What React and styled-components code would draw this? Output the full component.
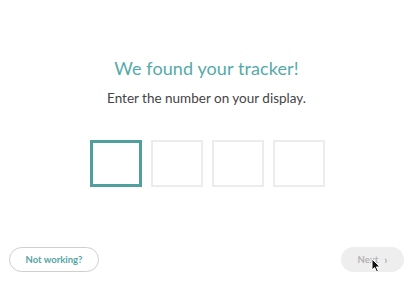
import React, { useState } from "react";
import styled, { createGlobalStyle } from "styled-components";

const GlobalStyle = createGlobalStyle`
  html, body {
    margin: 0;
    padding: 0;
    background: #fff;
  }
  body {
    font-family: "Lato", "Open Sans", sans-serif;
  }
`;

const Screen = styled.div`
  width: 413px;
  height: 283px;
  display: flex;
  flex-direction: column;
  align-items: center;
  box-sizing: border-box;
  padding-top: 57px;
  position: relative;
`;

const Title = styled.h1`
  margin: 0;
  font-size: 18px;
  font-weight: 400;
  color: #55aaa9;
  letter-spacing: 0.1px;
`;

const Subtitle = styled.p`
  margin: 11px 0 0;
  font-size: 13.5px;
  color: #444;
`;

const Digits = styled.div`
  display: flex;
  gap: 9px;
  margin-top: 34px;
  margin-left: 1px;
`;

const Digit = styled.div`
  width: 52px;
  height: 47px;
  box-sizing: border-box;
  border: ${(p) => (p.$active ? "3px solid #4e9f9e" : "2px solid #ececec")};
`;

const Footer = styled.div`
  display: flex;
  justify-content: space-between;
  align-items: center;
  width: 100%;
  box-sizing: border-box;
  padding: 0 9px;
  margin-top: auto;
  margin-bottom: 11px;
`;

const PillButton = styled.button`
  height: 25px;
  border-radius: 13px;
  font-family: inherit;
  font-size: 9.5px;
  font-weight: 700;
  cursor: pointer;
  display: flex;
  align-items: center;
  justify-content: center;
  gap: 6px;
  padding: 0;
  border: ${(p) => (p.$ghost ? "1px solid #cfcfcf" : "none")};
  background: ${(p) => (p.$ghost ? "#fff" : "#eeeeee")};
  color: ${(p) => (p.$ghost ? "#55a6a5" : "#b3b3b3")};
  width: ${(p) => p.$w}px;
`;

const Chevron = styled.span`
  font-size: 11px;
  font-weight: 400;
  color: #999;
`;

const Cursor = styled.svg`
  position: absolute;
  left: 371px;
  top: 258px;
  width: 11px;
  height: 15px;
`;

export default function App() {
  const [active] = useState(0);
  return (
    <>
      <GlobalStyle />
      <Screen>
        <Title>We found your tracker!</Title>
        <Subtitle>Enter the number on your display.</Subtitle>
        <Digits>
          {[0, 1, 2, 3].map((i) => (
            <Digit key={i} $active={i === active} />
          ))}
        </Digits>
        <Footer>
          <PillButton $ghost $w={90}>Not working?</PillButton>
          <PillButton $w={63}>
            Next <Chevron>›</Chevron>
          </PillButton>
        </Footer>
        <Cursor viewBox="0 0 11 15">
          <path
            d="M1 1 L1 12 L3.6 9.6 L5.6 14 L7.4 13.2 L5.4 8.9 L9 8.9 Z"
            fill="#111"
            stroke="#fff"
            strokeWidth="1"
            strokeLinejoin="round"
          />
        </Cursor>
      </Screen>
    </>
  );
}
